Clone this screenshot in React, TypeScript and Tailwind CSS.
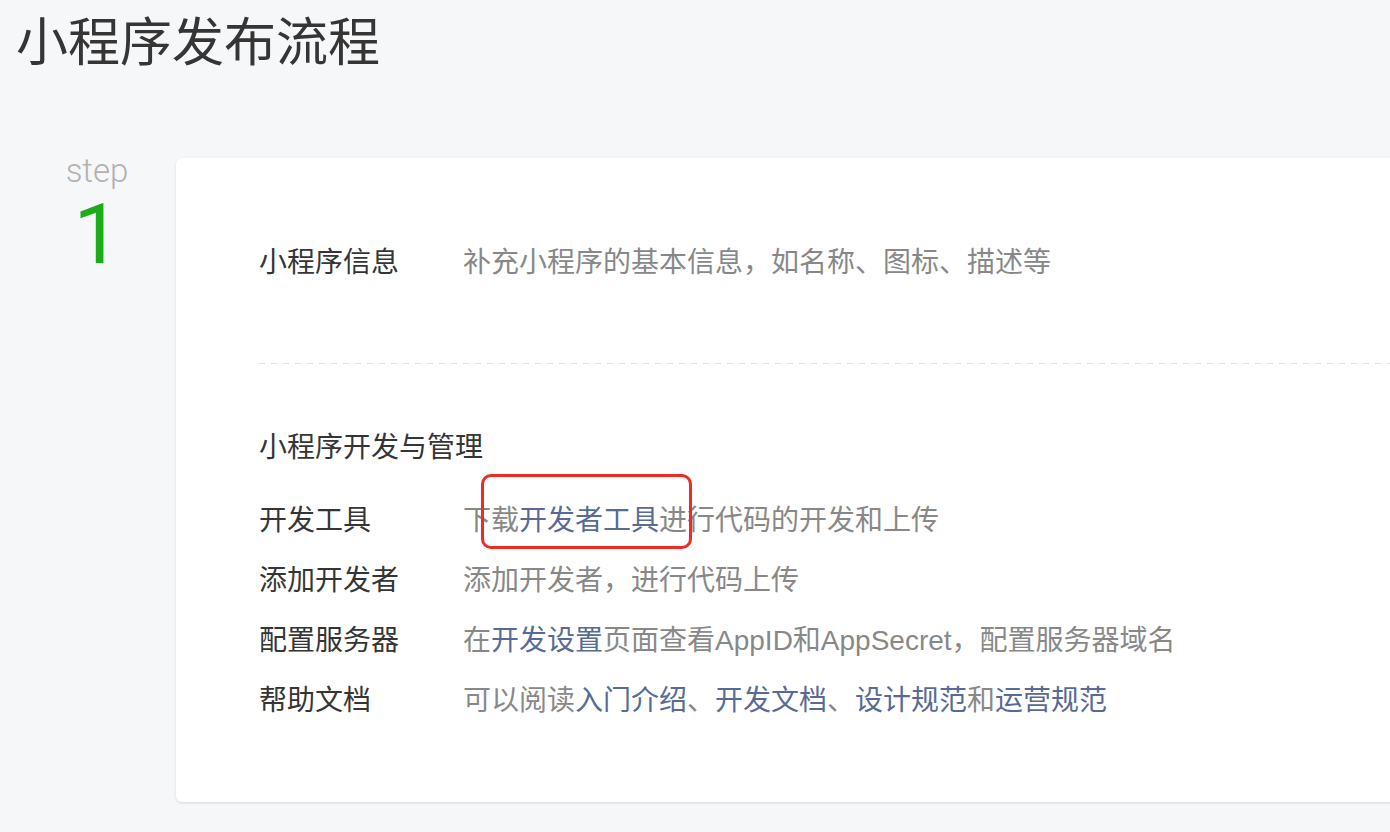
import React from 'react';

const rows = [
  {
    label: '开发工具',
    desc: (
      <>
        下载<a className="text-[#576b95]">开发者工具</a>进行代码的开发和上传
      </>
    ),
    marked: true,
  },
  { label: '添加开发者', desc: <>添加开发者，进行代码上传</> },
  {
    label: '配置服务器',
    desc: (
      <>
        在<a className="text-[#576b95]">开发设置</a>页面查看AppID和AppSecret，配置服务器域名
      </>
    ),
  },
  {
    label: '帮助文档',
    desc: (
      <>
        可以阅读<a className="text-[#576b95]">入门介绍</a>、<a className="text-[#576b95]">开发文档</a>、
        <a className="text-[#576b95]">设计规范</a>和<a className="text-[#576b95]">运营规范</a>
      </>
    ),
  },
];

const App: React.FC = () => {
  return (
    <div className="w-[1390px] h-[832px] overflow-hidden bg-[#f6f7f9] font-['Liberation_Sans','Noto_Sans_CJK_SC',sans-serif]">
      {/* Title */}
      <h1 className="pl-[16px] pt-[12px] text-[52px] leading-[62px] text-[#353535] font-normal">小程序发布流程</h1>

      <div className="flex pl-[18px] mt-[84px]">
        {/* Step marker */}
        <div className="w-[158px] flex-none flex flex-col items-center -mt-[7px]">
          <span className="font-['Roboto',sans-serif] font-light text-[33px] leading-[40px] text-[#b2b2b2]">step</span>
          <span className="mt-[2px] font-['Roboto',sans-serif] text-[84px] leading-[84px] text-[#1aad19]">1</span>
        </div>

        {/* Card */}
        <div className="w-[1300px] flex-none bg-white rounded-md shadow-[0_1px_3px_rgba(0,0,0,0.12)] pl-[83px] pt-[75px] pb-[71px] text-[28px] leading-[60px]">
          <div className="flex">
            <span className="w-[204px] flex-none text-[#353535]">小程序信息</span>
            <span className="text-[#888]">补充小程序的基本信息，如名称、图标、描述等</span>
          </div>

          <div className="mt-[70px] h-px bg-[linear-gradient(to_right,#dedede_50%,transparent_50%)] bg-[length:12px_1px]" />

          <div className="mt-[54px] text-[#353535]">小程序开发与管理</div>

          <div className="mt-[13px]">
            {rows.map((r) => (
              <div key={r.label} className="flex">
                <span className="w-[204px] flex-none text-[#353535]">{r.label}</span>
                <span className="relative text-[#888]">
                  {r.desc}
                  {r.marked && (
                    <span className="absolute left-[18px] top-[-17px] w-[211px] h-[75px] border-[3px] border-[#ee2b24] rounded-[10px]" />
                  )}
                </span>
              </div>
            ))}
          </div>
        </div>
      </div>
    </div>
  );
};

export default App;
